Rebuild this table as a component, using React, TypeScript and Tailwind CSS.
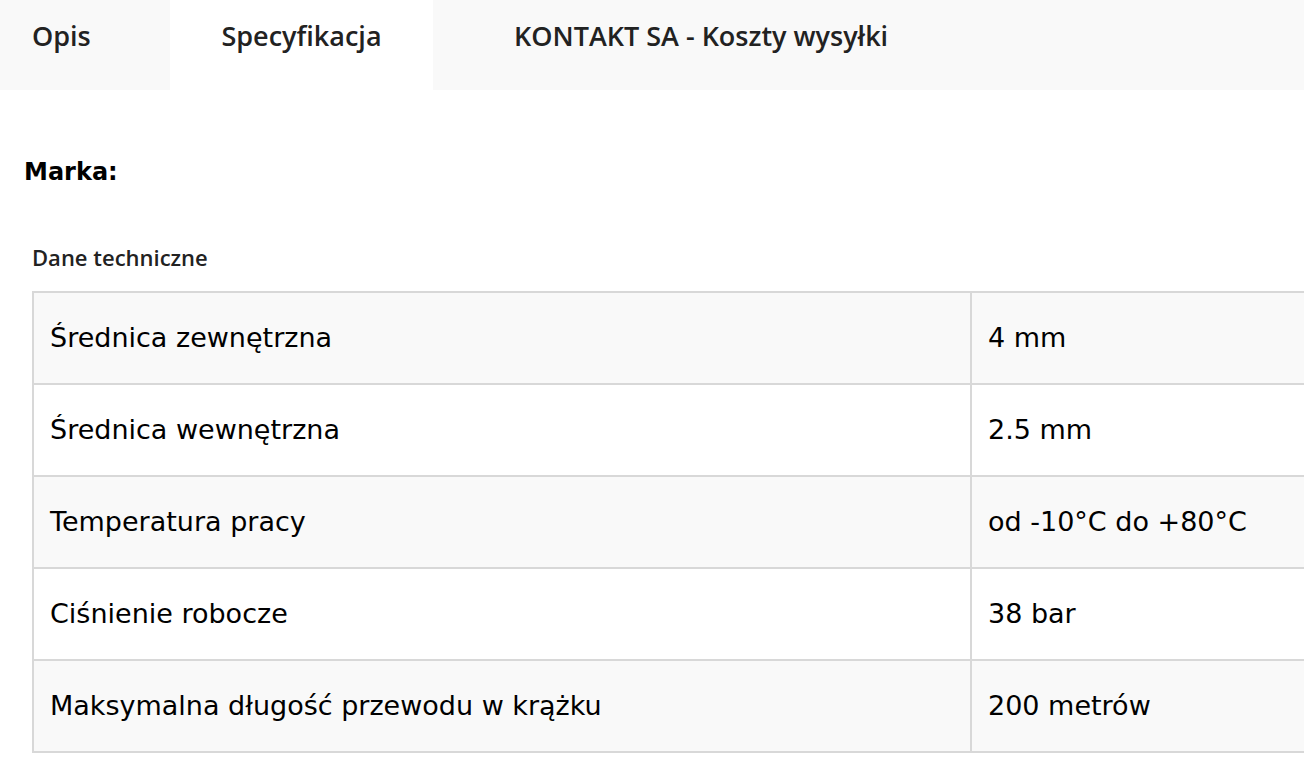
import React from "react";

type Row = { label: string; value: string };

const ROWS: Row[] = [
  { label: "Średnica zewnętrzna", value: "4 mm" },
  { label: "Średnica wewnętrzna", value: "2.5 mm" },
  { label: "Temperatura pracy", value: "od -10°C do +80°C" },
  { label: "Ciśnienie robocze", value: "38 bar" },
  { label: "Maksymalna długość przewodu w krążku", value: "200 metrów" },
];

export default function App() {
  return (
    <div className="w-[1304px] h-[774px] overflow-hidden bg-white font-['Open_Sans',sans-serif]">
      {/* tabs */}
      <div className="flex h-[90px] bg-[#f9f9f9] text-[27px] font-semibold leading-[36px] text-[#222]">
        <div className="w-[170px] pl-[32px] pt-[18px]">Opis</div>
        <div className="w-[263px] bg-white pt-[18px] text-center">Specyfikacja</div>
        <div className="pl-[81px] pt-[18px]">KONTAKT SA - Koszty wysyłki</div>
      </div>

      <div className="pl-[24px] pt-[64px] font-['DejaVu_Sans',sans-serif] text-[24px] font-bold leading-[36px] text-black">
        Marka:
      </div>

      <div className="pl-[32px] pt-[52px] text-[22px] font-semibold leading-[30px] text-[#222]">
        Dane techniczne
      </div>

      <table className="ml-[32px] mt-[19px] w-[1340px] border-collapse font-['DejaVu_Sans',sans-serif] text-[27px] text-black">
        <tbody>
          {ROWS.map((r, i) => (
            <tr key={r.label} className={i % 2 === 0 ? "bg-[#f9f9f9]" : "bg-white"}>
              <td className="w-[938px] h-[92px] border-2 border-[#d8d8d8] pl-[16px]">{r.label}</td>
              <td className="h-[92px] border-2 border-[#d8d8d8] pl-[16px]">{r.value}</td>
            </tr>
          ))}
        </tbody>
      </table>
    </div>
  );
}
